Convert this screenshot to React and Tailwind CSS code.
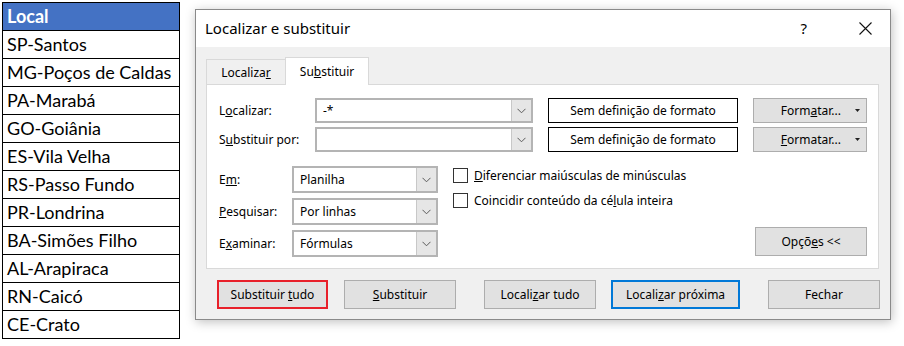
import React from 'react'

const cities = [
  'SP-Santos',
  'MG-Poços de Caldas',
  'PA-Marabá',
  'GO-Goiânia',
  'ES-Vila Velha',
  'RS-Passo Fundo',
  'PR-Londrina',
  'BA-Simões Filho',
  'AL-Arapiraca',
  'RN-Caicó',
  'CE-Crato',
]

const ui = { fontFamily: '"Noto Sans", "Open Sans", sans-serif' }

function Chevron() {
  return (
    <svg width="9" height="6" viewBox="0 0 9 6" fill="none">
      <path d="M0.5 0.8 L4.5 4.8 L8.5 0.8" stroke="#5a5a5a" strokeWidth="1" />
    </svg>
  )
}

// combo box with the little chevron button on the right
function Combo({ value, w, h }) {
  return (
    <div
      className="flex items-stretch border-2 border-[#b4b4b4] bg-white"
      style={{ width: w, height: h }}
    >
      <div className="flex-1 flex items-center pl-[6px] text-[12px] text-black">{value}</div>
      <div className="w-[20px] flex items-center justify-center bg-[#e6e6e6] border-l border-[#c8c8c8]">
        <Chevron />
      </div>
    </div>
  )
}

function Btn({ children, w, ring }) {
  let cls = 'border border-[#adadad]'
  if (ring === 'red') cls = 'border-2 border-[#e8202a]'
  if (ring === 'blue') cls = 'border-2 border-[#0078d7]'
  return (
    <div
      className={`h-[29px] flex items-center justify-center bg-[#e1e1e1] text-[12px] text-black ${cls}`}
      style={{ width: w }}
    >
      {children}
    </div>
  )
}

function Formatar({ children }) {
  return (
    <div className="w-[114px] h-[25px] flex items-center justify-end pr-[6px] bg-[#e1e1e1] border border-[#adadad] text-[12px] text-black">
      <span>{children}</span>
      <svg className="ml-[14px]" width="5" height="3" viewBox="0 0 5 3">
        <path d="M0 0 H5 L2.5 3 Z" fill="#222" />
      </svg>
    </div>
  )
}

function Check({ children }) {
  return (
    <div className="flex items-center h-[15px] text-[12px] text-black">
      <div className="w-[15px] h-[15px] border border-[#333] bg-white mr-[6px]" />
      <span>{children}</span>
    </div>
  )
}

export default function App() {
  return (
    <div className="w-[904px] h-[346px] bg-white flex pt-[2px] pl-[2px]">
      {/* spreadsheet column */}
      <div
        className="w-[178px] self-start border-t border-x border-black"
        style={{ fontFamily: 'Lato, "Noto Sans", sans-serif' }}
      >
        <div className="h-[28px] flex items-center pl-[4px] bg-[#4472c4] border-b border-black text-white font-bold text-[18px]">
          Local
        </div>
        {cities.map((c) => (
          <div key={c} className="h-[28px] flex items-center pl-[4px] border-b border-black text-[18px] text-black">
            {c}
          </div>
        ))}
      </div>

      {/* dialog */}
      <div
        className="ml-[15px] mt-[7px] w-[696px] h-[311px] border border-[#8a8a8a] bg-[#f0f0f0] shadow-[1px_2px_10px_rgba(0,0,0,0.25)] flex flex-col"
        style={ui}
      >
        <div className="h-[37px] bg-white flex items-center pl-[9px] pr-[18px] text-[15px] text-black">
          <span className="flex-1">Localizar e substituir</span>
          <span className="text-[15px] mr-[52px]">?</span>
          <svg width="13" height="13" viewBox="0 0 13 13">
            <path d="M0.5 0.5 L12.5 12.5 M12.5 0.5 L0.5 12.5" stroke="#111" strokeWidth="1.1" />
          </svg>
        </div>

        <div className="flex-1 flex flex-col px-[10px] pt-[9px]">
          {/* tabs */}
          <div className="flex items-end h-[28px] text-[12px] text-black">
            <div className="w-[79px] h-[26px] flex items-center justify-center bg-[#f0f0f0] border-t border-l border-[#d9d9d9] mb-[-1px]">
              Localiza<span className="underline">r</span>
            </div>
            <div className="w-[84px] h-[28px] flex items-center justify-center bg-white border-t border-x border-[#d9d9d9] relative z-10 mb-[-1px]">
              Su<span className="underline">b</span>stituir
            </div>
          </div>

          {/* tab panel */}
          <div className="w-[673px] h-[185px] bg-white border border-[#d9d9d9] pl-[12px] pt-[13px] pr-[11px] text-[12px] text-black">
            <div className="flex items-center h-[25px]">
              <div className="w-[96px]">L<span className="underline">o</span>calizar:</div>
              <Combo value="-*" w={218} h={25} />
              <div className="ml-[15px] w-[190px] h-[25px] border border-black flex items-center justify-center">
                Sem definição de formato
              </div>
              <div className="ml-[15px]">
                <Formatar>
                  Form<span className="underline">a</span>tar...
                </Formatar>
              </div>
            </div>
            <div className="flex items-center h-[25px] mt-[4px]">
              <div className="w-[96px]">S<span className="underline">u</span>bstituir por:</div>
              <Combo value="" w={218} h={25} />
              <div className="ml-[15px] w-[190px] h-[25px] border border-black flex items-center justify-center">
                Sem definição de formato
              </div>
              <div className="ml-[15px]">
                <Formatar>
                  <span className="underline">F</span>ormatar...
                </Formatar>
              </div>
            </div>

            <div className="flex mt-[14px]">
              <div className="flex flex-col gap-[5px]">
                <div className="flex items-center">
                  <div className="w-[73px]">E<span className="underline">m</span>:</div>
                  <Combo value="Planilha" w={146} h={27} />
                </div>
                <div className="flex items-center">
                  <div className="w-[73px]"><span className="underline">P</span>esquisar:</div>
                  <Combo value="Por linhas" w={146} h={27} />
                </div>
                <div className="flex items-center">
                  <div className="w-[73px]">E<span className="underline">x</span>aminar:</div>
                  <Combo value="Fórmulas" w={146} h={27} />
                </div>
              </div>
              <div className="ml-[15px] pt-[2px] flex flex-col gap-[10px]">
                <Check>
                  <span className="underline">D</span>iferenciar maiúsculas de minúsculas
                </Check>
                <Check>
                  Coincidir conteúdo da cé<span className="underline">l</span>ula inteira
                </Check>
              </div>
              <div className="flex-1 flex justify-end items-end pb-[1px]">
                <Btn w={112}>
                  Opçõ<span className="underline">e</span>s &lt;&lt;
                </Btn>
              </div>
            </div>
          </div>

          {/* bottom buttons */}
          <div className="flex mt-[11px] pl-[11px]">
            <Btn w={112} ring="red">
              Substituir <span className="underline ml-[3px]">t</span>udo
            </Btn>
            <div className="ml-[16px]">
              <Btn w={112}>
                <span className="underline">S</span>ubstituir
              </Btn>
            </div>
            <div className="ml-[28px]">
              <Btn w={112}>
                Locali<span className="underline">z</span>ar tudo
              </Btn>
            </div>
            <div className="ml-[15px]">
              <Btn w={129} ring="blue">
                Locali<span className="underline">z</span>ar próxima
              </Btn>
            </div>
            <div className="ml-[28px]">
              <Btn w={112}>Fechar</Btn>
            </div>
          </div>
        </div>
      </div>
    </div>
  )
}
